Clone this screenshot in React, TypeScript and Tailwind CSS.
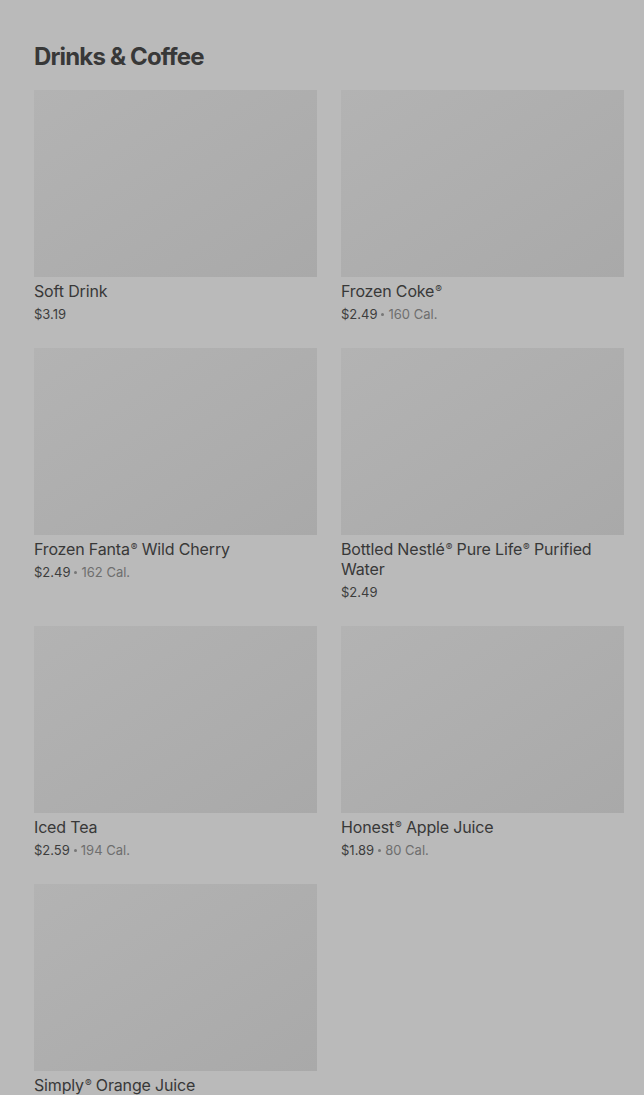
const items = [
  { name: ["Soft Drink"], price: "$3.19" },
  { name: ["Frozen Coke", "®"], price: "$2.49", cal: "160 Cal." },
  { name: ["Frozen Fanta", "®", " Wild Cherry"], price: "$2.49", cal: "162 Cal." },
  { name: ["Bottled Nestlé", "®", " Pure Life", "®", " Purified Water"], price: "$2.49" },
  { name: ["Iced Tea"], price: "$2.59", cal: "194 Cal." },
  { name: ["Honest", "®", " Apple Juice"], price: "$1.89", cal: "80 Cal." },
  { name: ["Simply", "®", " Orange Juice"], price: "$3.19", cal: "210 Cal." },
];

export default function App() {
  return (
    <div
      className="min-h-screen bg-[#bababa] pl-[34px] pr-[20px] pt-[40px] pb-10"
      style={{ fontFamily: "Inter, 'Noto Sans', sans-serif" }}
    >
      <h2 className="text-[24px] leading-[34px] font-bold tracking-[-0.035em] text-[#383838]">
        Drinks &amp; Coffee
      </h2>
      <div className="mt-[16px] grid grid-cols-2 gap-x-[24px] gap-y-[24px]">
        {items.map((item) => (
          <div key={item.name.join("")}>
            <div className="h-[187px] bg-gradient-to-br from-[#b3b3b3] to-[#a9a9a9]" />
            <div className="mt-1 text-[16px] leading-[20px] text-[#383838] tracking-[-0.01em]">
              {item.name.map((part, i) =>
                part === "®" ? (
                  <span key={i} className="ml-[1px] align-[0.45em] text-[10px] leading-none">
                    ®
                  </span>
                ) : (
                  <span key={i}>{part}</span>
                ),
              )}
            </div>
            <div className="mt-[3px] flex items-center text-[13px] leading-[20px] text-[#3d3d3d]">
              <span>{item.price}</span>
              {item.cal && (
                <>
                  <span className="mx-[4px] inline-block h-[3px] w-[3px] rounded-full bg-[#777]" />
                  <span className="text-[#6e6e6e]">{item.cal}</span>
                </>
              )}
            </div>
          </div>
        ))}
      </div>
    </div>
  );
}
